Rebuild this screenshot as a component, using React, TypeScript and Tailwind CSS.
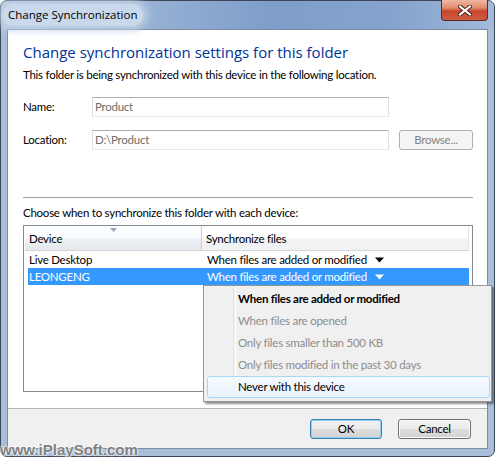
import React from "react";

const options = [
  { label: "When files are added or modified", bold: true },
  { label: "When files are opened", disabled: true },
  { label: "Only files smaller than 500 KB", disabled: true },
  { label: "Only files modified in the past 30 days", disabled: true },
  { label: "Never with this device", hover: true },
];

function DownArrow({ color }: { color: string }) {
  return (
    <svg width="10" height="6" viewBox="0 0 10 6" className="shrink-0">
      <path d="M0 0.5 L9 0.5 L4.5 5.5 Z" fill={color} />
    </svg>
  );
}

function CloseButton() {
  return (
    <div className="-mt-[1px] flex h-[21px] w-[47px] items-center justify-center rounded-b-[4px] border border-t-0 border-[#5e2a24] bg-[linear-gradient(to_bottom,#eeb8a2_0%,#de8b6d_40%,#c8472d_55%,#c95d44_100%)]">
      <svg width="14" height="11" viewBox="0 0 14 11">
        <path d="M2 1.5 L12 9.5 M12 1.5 L2 9.5" stroke="#4a2320" strokeWidth="4" strokeLinecap="square" />
        <path d="M2 1.5 L12 9.5 M12 1.5 L2 9.5" stroke="#ffffff" strokeWidth="2" strokeLinecap="square" />
      </svg>
    </div>
  );
}

function Button({ label, primary, disabled }: { label: string; primary?: boolean; disabled?: boolean }) {
  if (disabled) {
    return (
      <div className="flex h-[20px] w-[74px] items-center justify-center rounded-[3px] border border-[#adb2b5] bg-[#f4f4f4] text-[#838383]">
        {label}
      </div>
    );
  }
  return (
    <div
      className={
        "flex h-[20px] items-center justify-center rounded-[3px] border bg-[linear-gradient(to_bottom,#f2f2f2_0%,#ebebeb_48%,#dddddd_52%,#d2d2d2_100%)] " +
        (primary
          ? "w-[72px] border-[#3c7fb1] shadow-[inset_0_0_0_1px_#8ed1f2]"
          : "w-[73px] border-[#707070] shadow-[inset_0_0_0_1px_#fcfcfc]")
      }
    >
      {label}
    </div>
  );
}

export default function App() {
  return (
    <div className="relative h-[457px] w-[495px] overflow-hidden bg-white font-['Lato',sans-serif] text-[11.5px] leading-[16px] tracking-[-0.25px] text-black">
      <div className="flex h-full flex-col rounded-[7px] border border-[#3b4656] bg-[#a9bed9] px-[6px] pb-[7px]">
        {/* title bar */}
        <div className="-mx-[6px] flex h-[28px] items-start justify-between rounded-t-[6px] bg-[linear-gradient(to_right,#b0c4dd_0%,#97b1d4_30%,#7e9dca_55%,#85a3cd_80%,#a3badb_100%)] px-[6px]">
          <div className="relative mt-[3px] -ml-[5px] flex h-[22px] items-center rounded-full bg-[#c9d8ea] px-[6px] shadow-[0_0_8px_4px_#c2d2e6]">
            <span className="font-['Open_Sans',sans-serif] text-[11.5px] tracking-normal text-black">Change Synchronization</span>
          </div>
          <CloseButton />
        </div>

        {/* client area */}
        <div className="flex flex-1 flex-col border border-[#7d8ca2] bg-white">
          <div className="flex flex-1 flex-col pl-[15px] pr-[14px]">
            <div className="mt-[12px] h-[20px] font-['Open_Sans',sans-serif] text-[15px] leading-[20px] tracking-normal text-[#003399]">
              Change synchronization settings for this folder
            </div>
            <div className="mt-[5px]">This folder is being synchronized with this device in the following location.</div>

            <div className="mt-[14px] flex h-[20px] items-center">
              <span className="w-[69px]">Name:</span>
              <div className="flex h-[20px] w-[297px] items-center border border-[#abadb3] border-l-[#dbdfe6] border-r-[#dbdfe6] border-b-[#e3e9ef] px-[2px] text-[#6d6d6d]">
                Product
              </div>
            </div>

            <div className="mt-[13px] flex h-[20px] items-center">
              <span className="w-[69px]">Location:</span>
              <div className="flex h-[20px] w-[297px] items-center border border-[#abadb3] border-l-[#dbdfe6] border-r-[#dbdfe6] border-b-[#e3e9ef] px-[2px] text-[#6d6d6d]">
                D:\Product
              </div>
              <div className="ml-auto">
                <Button label="Browse..." disabled />
              </div>
            </div>

            <div className="mt-[47px] border-t border-[#a0a0a0]" />

            <div className="mt-[7px]">Choose when to synchronize this folder with each device:</div>

            <div className="mt-[4px] h-[167px] border border-[#828790]">
              {/* header */}
              <div className="ml-[1px] flex h-[25px] w-[444px] border-b border-[#d5d5d5] bg-[linear-gradient(to_bottom,#ffffff_0%,#ffffff_50%,#f1f2f4_55%,#f1f2f4_100%)]">
                <div className="relative flex w-[177px] items-center border-r border-[#c0cde0] bg-[linear-gradient(to_bottom,#fbfcfd_0%,#fbfcfd_50%,#eef1f5_55%,#e3e8ee_100%)] pl-[4px] pt-[2px]">
                  <svg width="7" height="4" viewBox="0 0 7 4" className="absolute left-[85px] top-[2px]">
                    <path d="M0 0 L7 0 L3.5 4 Z" fill="#97a8c0" />
                  </svg>
                  Device
                </div>
                <div className="flex flex-1 items-center border-r border-[#e3e3e3] pl-[4px] pt-[2px]">Synchronize files</div>
              </div>

              {/* rows */}
              <div className="ml-[4px] flex h-[17px] w-[441px] items-center">
                <span className="w-[174px] pl-[1px]">Live Desktop</span>
                <span className="flex items-center gap-[8px] pl-[5px]">
                  When files are added or modified
                  <DownArrow color="#000000" />
                </span>
              </div>
              <div className="ml-[4px] flex h-[17px] w-[441px] items-center bg-[#3399ff] text-white">
                <span className="w-[174px] pl-[1px]">LEONGENG</span>
                <span className="flex items-center gap-[8px] pl-[5px]">
                  When files are added or modified
                  <DownArrow color="#ffffff" />
                </span>
              </div>
            </div>
          </div>

          {/* footer */}
          <div className="flex h-[40px] justify-end gap-[16px] border-t border-[#b4b4b4] bg-[#f0f0f0] pr-[16px] pt-[10px]">
            <Button label="OK" primary />
            <Button label="Cancel" />
          </div>
        </div>
      </div>

      {/* dropdown menu */}
      <div className="absolute left-[203px] top-[285px] h-[117px] w-[289px] border border-[#979797] bg-[#f0f0f0] pl-[3px] pr-[1px] pt-[2px] shadow-[2px_2px_2px_rgba(0,0,0,0.45)]">
        <div className="absolute bottom-[2px] left-[29px] top-[2px] w-[2px] border-l border-[#e2e3e3] [box-shadow:1px_0_0_#ffffff]" />
        {options.map((o) => (
          <div
            key={o.label}
            className={
              "relative flex h-[22px] items-center rounded-[3px] " +
              (o.hover ? "border border-[#a8d8f3] bg-[linear-gradient(to_bottom,#f5fafe,#e8f3fc)] pl-[30px] " : "pl-[31px] ") +
              (o.disabled ? "text-[#8d8d8d] " : "text-black ") +
              (o.bold ? "font-bold" : "")
            }
          >
            {o.label}
          </div>
        ))}
      </div>

      {/* watermark */}
      <div className="absolute bottom-[0px] left-[0px] font-['Liberation_Sans',sans-serif] text-[15px] font-bold leading-[15px] tracking-normal text-[#808080] [text-shadow:0_0_2px_#ffffff,0_0_2px_#ffffff,0_0_2px_#ffffff]">
        www.iPlaySoft.com
      </div>
    </div>
  );
}
